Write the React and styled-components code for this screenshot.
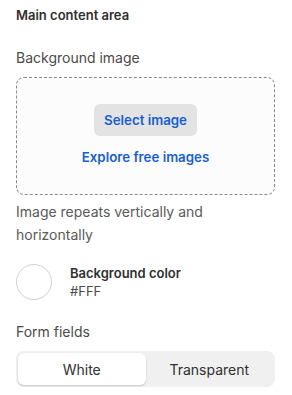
import React, { useState } from 'react'
import styled, { createGlobalStyle } from 'styled-components';

const GlobalStyle = createGlobalStyle`
  body {
    margin: 0;
    background: #fff;
    font-family: Inter, "Noto Sans", sans-serif;
    color: #303030;
  }
`;

const Panel = styled.div`
  width: 292px;
  padding: 5px 17px 0 16px;
  box-sizing: border-box;
`;

const Title = styled.h2`
  margin: 0;
  font-size: 13px;
  font-weight: 600;
  line-height: 20px;
  color: #303030;
`;

const Label = styled.div`
  font-size: 14px;
  line-height: 20px;
  color: #4a4a4a;
  margin-top: ${(p) => p.top || 0}px;
  margin-bottom: ${(p) => p.bottom || 0}px;
`;

const DropZone = styled.div`
  height: 118px;
  border: 1px dashed #8a8a8a;
  border-radius: 8px;
  background: #fcfcfc;
  box-sizing: border-box;
  display: flex;
  flex-direction: column;
  align-items: center;
  padding-top: 26px;
  gap: 11px;
`;

const SelectButton = styled.button`
  border: none;
  background: #e3e3e3;
  border-radius: 6px;
  height: 32px;
  padding: 0 10px;
  font-family: inherit;
  font-size: 13.3px;
  font-weight: 600;
  color: #1a5fd0;
  cursor: pointer;
`;

const LinkText = styled.a`
  font-size: 13.3px;
  font-weight: 600;
  color: #1a5fd0;
  text-decoration: none;
  line-height: 20px;
`;

const Help = styled.p`
  margin: 5px 0 0;
  font-size: 14px;
  line-height: 23px;
  color: #5a5a5a;
`;

const ColorRow = styled.div`
  display: flex;
  align-items: center;
  gap: 18px;
  margin-top: 18px;
`;

const Swatch = styled.div`
  width: 36px;
  height: 36px;
  border-radius: 50%;
  border: 1px solid #d0d0d0;
  background: ${(p) => p.color};
  box-sizing: border-box;
`;

const ColorName = styled.div`
  font-size: 13px;
  font-weight: 600;
  line-height: 18px;
  color: #303030;
`;

const ColorValue = styled.div`
  font-size: 13px;
  line-height: 18px;
  color: #4a4a4a;
`;

const Segmented = styled.div`
  display: flex;
  background: #f0f0f0;
  border-radius: 8px;
  padding: 2px;
  height: 36px;
  box-sizing: border-box;
`;

const Segment = styled.button`
  flex: 1;
  border: none;
  border-radius: 6px;
  font-family: inherit;
  font-size: 14px;
  color: #303030;
  background: ${(p) => (p.active ? '#fff' : 'transparent')};
  box-shadow: ${(p) => (p.active ? '0 1px 2px rgba(0,0,0,0.18)' : 'none')};
  cursor: pointer;
`;

const App = () => {
  const [mode, setMode] = useState('White');
  return (
    <Panel>
      <GlobalStyle />
      <Title>Main content area</Title>
      <Label top={23} bottom={9}>Background image</Label>
      <DropZone>
        <SelectButton>Select image</SelectButton>
        <LinkText href="#">Explore free images</LinkText>
      </DropZone>
      <Help>Image repeats vertically and horizontally</Help>
      <ColorRow>
        <Swatch color="#fff" />
        <div>
          <ColorName>Background color</ColorName>
          <ColorValue>#FFF</ColorValue>
        </div>
      </ColorRow>
      <Label top={22} bottom={9}>Form fields</Label>
      <Segmented>
        {['White', 'Transparent'].map((m) => (
          <Segment key={m} active={mode === m} onClick={() => setMode(m)}>
            {m}
          </Segment>
        ))}
      </Segmented>
    </Panel>
  )
}

export default App
